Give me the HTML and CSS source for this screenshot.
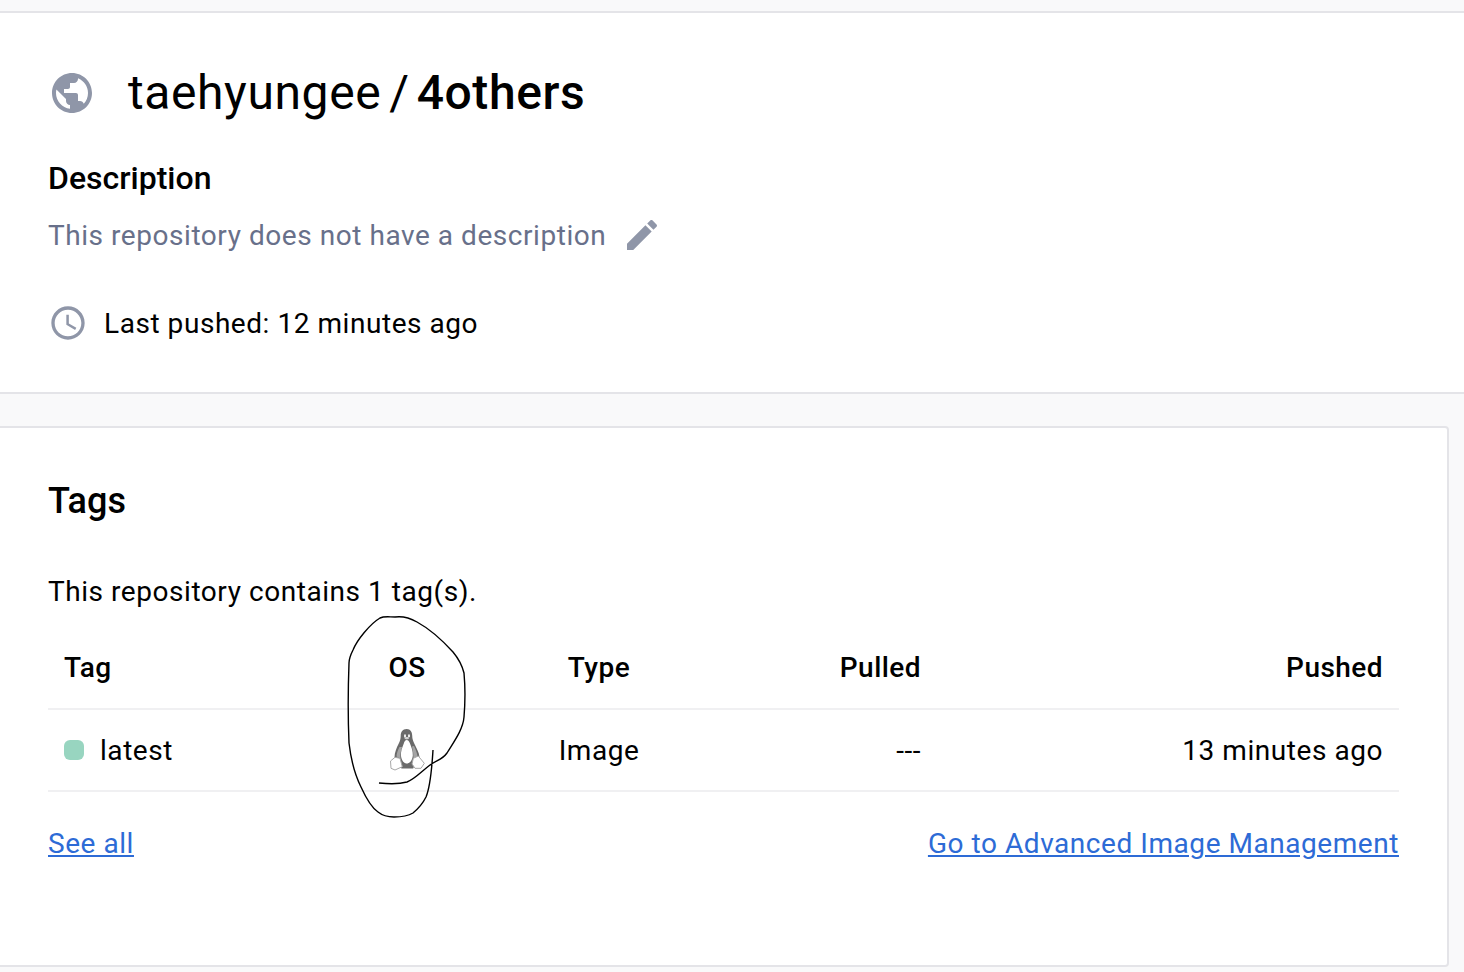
FILE: index.html

```html
<!DOCTYPE html>
<html lang="en">
<head>
    <meta charset="UTF-8">
    <title>taehyungee / 4others</title>
    <link rel="stylesheet" href="styles.css">
</head>
<body>
<section class="summary">
    <div class="repo-title">
        <svg class="icon-globe" viewBox="0 0 24 24"><path d="M12 2C6.48 2 2 6.48 2 12s4.48 10 10 10 10-4.48 10-10S17.52 2 12 2zm-1 17.93c-3.95-.49-7-3.85-7-7.93 0-.62.08-1.21.21-1.79L9 15v1c0 1.1.9 2 2 2v1.93zm6.9-2.54c-.26-.81-1-1.39-1.9-1.39h-1v-3c0-.55-.45-1-1-1H8v-2h2c.55 0 1-.45 1-1V7h2c1.1 0 2-.9 2-2v-.41c2.93 1.19 5 4.06 5 7.41 0 2.08-.8 3.97-2.1 5.39z"/></svg>
        <h1>taehyungee<span class="slash">/</span><strong>4others</strong></h1>
    </div>
    <h2>Description</h2>
    <div class="description">
        <span>This repository does not have a description</span>
        <svg class="icon-edit" viewBox="0 0 24 24"><path d="M3 17.25V21h3.75L17.81 9.94l-3.75-3.75L3 17.25zM20.71 7.04c.39-.39.39-1.02 0-1.41l-2.34-2.34c-.39-.39-1.02-.39-1.41 0l-1.83 1.83 3.75 3.75 1.83-1.83z"/></svg>
    </div>
    <div class="last-pushed">
        <svg class="icon-clock" viewBox="0 0 24 24"><path d="M11.99 2C6.47 2 2 6.48 2 12s4.47 10 9.99 10C17.52 22 22 17.52 22 12S17.52 2 11.99 2zM12 20c-4.42 0-8-3.58-8-8s3.58-8 8-8 8 3.58 8 8-3.58 8-8 8z"/><path d="M12.5 7H11v6l5.25 3.15.75-1.23-4.5-2.67z"/></svg>
        <span>Last pushed: 12 minutes ago</span>
    </div>
</section>

<section class="tags">
    <h3>Tags</h3>
    <p class="tag-count">This repository contains 1 tag(s).</p>
    <div class="tag-table">
        <div class="tag-row tag-head">
            <div>Tag</div>
            <div class="center">OS</div>
            <div class="center">Type</div>
            <div class="right">Pulled</div>
            <div class="right">Pushed</div>
        </div>
        <div class="tag-row">
            <div class="tag-name"><span class="dot"></span>latest</div>
            <div class="center os-cell">
                <svg class="icon-tux" viewBox="0 0 35 42">
                    <path class="tux-body" d="M16.700 0C12.500 0 10.700 3 10.700 7c0 3-.700 5-2.200 8-2 4-4 8.500-4 13.500l7 11h11.600l6.400-11.500c-.500-5-3.500-9.500-5-13-1.300-3-2.300-5-2.300-8.500C22.200 3 20.500 0 16.700 0z"/>
                    <path class="tux-wing" d="M9.500 18c-1.500 3-3 6.500-3 9.500l4 2c-.500-4 .500-8 1.500-11.500zM24 17c1.500 3 3 7 3.500 10.500l-4 2c0-4-.500-8-1.500-12z"/>
                    <path class="tux-belly" d="M16.700 11c-1.500 0-2.200 1.500-2.900 3.500-1.500 4-3.300 8-2.800 12.500.5 4.500 3 7.500 5.800 7.500s5.600-3 6-8c.200-4.500-1.500-8.500-3-12.500-.8-2-1.700-3-3.100-3z"/>
                    <path class="tux-eye" d="M14 5.500h2v2.500h-2zM18 5.500h2v2.500h-2z"/>
                    <path class="tux-beak" d="M14 8.500c1-.8 4.500-.8 5.500 0-1 2.500-4.500 2.500-5.500 0z"/>
                    <path class="tux-foot" d="M.5 32L5 28.300l5 1 2.300 8.400L5 41l-4-1.700zM23.300 29.300l5-2.300 6 7.300-3.300 5H25l-3-4.300z"/>
                </svg>
            </div>
            <div class="center">Image</div>
            <div class="right">---</div>
            <div class="right">13 minutes ago</div>
        </div>
    </div>
    <div class="tag-links">
        <a href="#">See all</a>
        <a href="#">Go to Advanced Image Management</a>
    </div>
</section>

<!-- pen circle drawn over the OS column -->
<svg class="scribble" viewBox="0 0 1464 972">
    <path d="M379 783C388 784 400 784 407 782C415 779 422 771 430 765C437 760 442 760 447 753C453 743 463 730 464 717C465 705 465 684 464 673C462 665 458 658 453 652C443 641 428 628 417 622C410 618 402 616 395 617C389 617 384 616 380 618C370 624 357 640 353 650C350 656 349 658 349 663C348 690 348 720 349 743C351 760 355 775 361 787C366 798 372 808 378 812C383 816 389 817 394 817C401 817 408 816 413 813C419 808 423 803 426 797C431 785 432 765 433 750"/>
</svg>
</body>
</html>
```

FILE: styles.css

```css
body {
    margin: 0;
    padding: 11px 0 0;
    background-color: #f9f9fa;
    color: #000;
    font-family: Roboto, sans-serif;
    font-size: 28px;
    letter-spacing: 0.55px;
    position: relative;
    height: 961px;
    overflow: hidden;
}
svg {
    display: block;
    flex: none;
}
.summary {
    background-color: #fff;
    border-top: 2px solid #e4e4e8;
    border-bottom: 2px solid #e4e4e8;
    padding: 51px 48px 40px;
    height: 288px;
}
.repo-title {
    display: flex;
    align-items: center;
    gap: 32px;
    height: 58px;
}
.icon-globe {
    width: 48px;
    height: 48px;
    fill: #8f96a8;
}
h1 {
    margin: 0;
    font-size: 48px;
    font-weight: 400;
    line-height: 58px;
    letter-spacing: 0.6px;
}
h1 .slash {
    margin: 0 7px 0 8px;
}
h1 strong {
    font-weight: 500;
}
h2 {
    margin: 36px 0 0;
    font-size: 32px;
    font-weight: 500;
    line-height: 40px;
    letter-spacing: 0;
}
.description {
    display: flex;
    align-items: center;
    gap: 16px;
    margin-top: 17px;
    height: 40px;
    color: #68708a;
}
.icon-edit {
    width: 40px;
    height: 40px;
    fill: #8f96a8;
}
.last-pushed {
    display: flex;
    align-items: center;
    gap: 16px;
    margin-top: 48px;
    height: 40px;
}
.icon-clock {
    width: 40px;
    height: 40px;
    fill: #8f96a8;
}
.tags {
    margin-top: 32px;
    width: 1449px;
    height: 541px;
    box-sizing: border-box;
    background-color: #fff;
    border: 2px solid #e4e4e8;
    border-left: 0;
    border-radius: 0 4px 4px 0;
    padding: 51px 48px 0;
}
h3 {
    margin: 0;
    font-size: 36px;
    font-weight: 500;
    line-height: 44px;
    letter-spacing: 0;
}
.tag-count {
    margin: 49px 0 0;
    line-height: 40px;
}
.tag-table {
    margin-top: 15px;
    width: 1351px;
}
.tag-row {
    display: grid;
    grid-template-columns: 298px 90px 294px 175px 462px;
    align-items: center;
    padding: 0 16px;
    height: 80px;
    border-bottom: 2px solid #f0f0f2;
}
.tag-head {
    height: 81px;
    font-weight: 500;
    letter-spacing: 0.45px;
}
.center {
    text-align: center;
}
.right {
    text-align: right;
}
.tag-name {
    display: flex;
    align-items: center;
    gap: 16px;
}
.dot {
    width: 20px;
    height: 20px;
    border-radius: 6px;
    background-color: #98d5c0;
}
.os-cell {
    display: flex;
    justify-content: center;
}
.icon-tux {
    width: 35px;
    height: 42px;
}
.tux-body {
    fill: #6a6a6a;
}
.tux-wing {
    fill: #a4a4a4;
}
.tux-belly {
    fill: #fff;
}
.tux-eye {
    fill: #e8e8e8;
}
.tux-beak {
    fill: #d0d0d0;
}
.tux-foot {
    fill: #fff;
    stroke: #a8a8a8;
    stroke-width: 1;
}
.tag-links {
    display: flex;
    justify-content: space-between;
    margin-top: 32px;
    width: 1351px;
    line-height: 40px;
}
.tag-links a {
    color: #2d6bd6;
}
.scribble {
    position: absolute;
    top: 0;
    left: 0;
    width: 1464px;
    height: 972px;
    pointer-events: none;
}
.scribble path {
    fill: none;
    stroke: #000;
    stroke-width: 1.4;
}
```
